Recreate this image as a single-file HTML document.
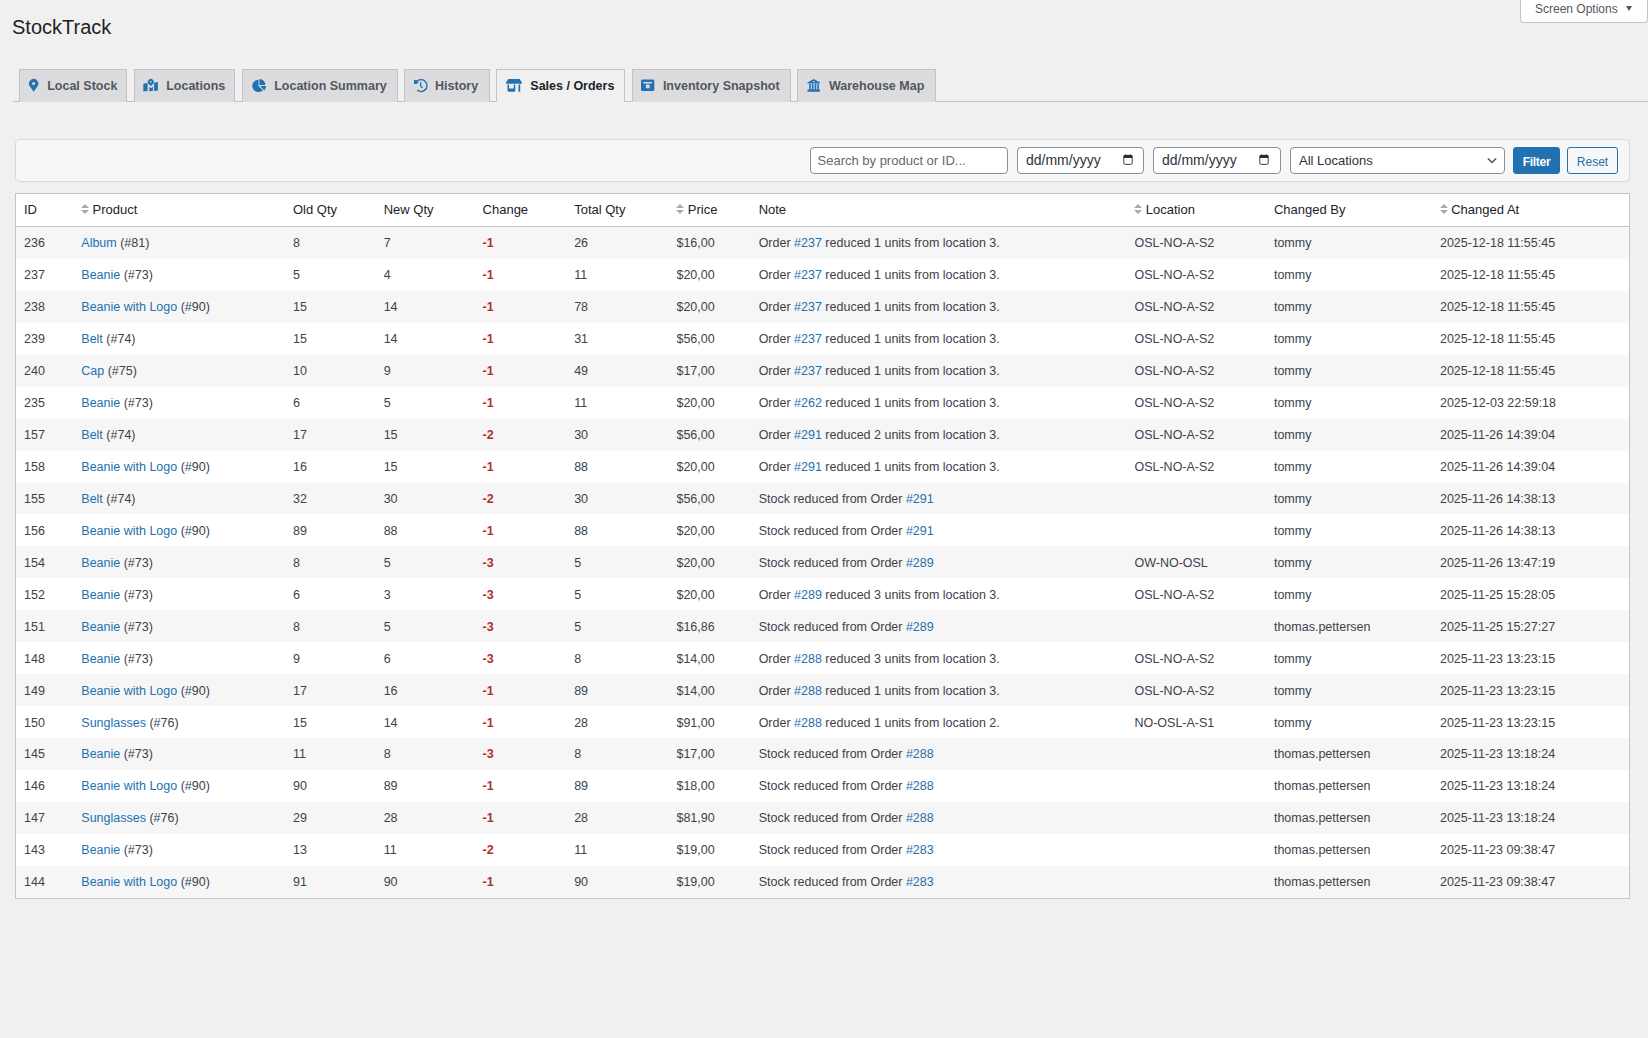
<!DOCTYPE html>
<html><head><meta charset="utf-8">
<style>
*{box-sizing:border-box}
html,body{margin:0;padding:0}
body{width:1648px;height:1038px;overflow:hidden;background:#f0f0f1;font-family:"Liberation Sans",sans-serif;color:#3c434a;position:relative}
.title{position:absolute;left:12px;top:15px;font-size:20px;line-height:24px;color:#1d2327;margin:0;font-weight:400}
.scr{position:absolute;left:1520px;top:-1px;width:128px;height:24px;background:#fff;border:1px solid #c3c4c7;border-top:none;border-radius:0 0 4px 4px;font-size:12px;color:#50575e;line-height:21px}
.scr span{position:absolute;left:14px;top:0}
.scr i{position:absolute;left:104.5px;top:7px;width:0;height:0;border-left:3.7px solid transparent;border-right:3.7px solid transparent;border-top:5.5px solid #50575e}
.tabline{position:absolute;left:13px;right:0;top:101px;height:1px;background:#c3c4c7}
.tab{position:absolute;top:69px;height:33px;background:#dcdcde;border:1px solid #c3c4c7;border-bottom:none;font-size:12.5px;font-weight:700;color:#50575e;line-height:31px;white-space:nowrap}
.tab.active{background:#f0f0f1;color:#1d2327;height:33px;z-index:2}
.tab svg{position:absolute;top:8px;fill:#2271b1}
.tab span{position:absolute;top:1px}
.fbox{position:absolute;left:15px;top:139px;width:1615px;height:43px;background:#f7f7f8;border:1px solid #d9d9dc;border-radius:5px}
.inp{position:absolute;top:147px;height:27px;background:#fff;border:1px solid #8c8f94;border-radius:4px;font-size:13px;color:#646970;line-height:25px;white-space:nowrap}
.inp span{position:absolute;top:0}
.btn{position:absolute;top:147px;height:27px;border-radius:3px;font-size:12px;line-height:28px;text-align:center}
table{position:absolute;left:15px;top:193px;width:1615px;border:1px solid #c3c4c7;border-collapse:separate;border-spacing:0;table-layout:fixed;background:#fff;font-size:13px}
th{height:33px;text-align:left;font-weight:400;color:#1d2327;border-bottom:1px solid #c3c4c7;padding:0 0 0 8px;white-space:nowrap;line-height:32px}
td{height:31.952px;padding:0 0 0 8px;white-space:nowrap;color:#3c434a;font-size:12.5px;letter-spacing:0;line-height:30px;padding-top:1px}
tbody tr:nth-child(odd) td{background:#f6f6f6}
a{color:#2271b1;text-decoration:none}
.neg{color:#b32d2e;font-weight:700}
.sort{display:inline-block;width:8px;height:12px;position:relative;margin-right:3.3px;vertical-align:-1px}
.sort:before{content:"";position:absolute;left:0;top:0.6px;border-left:4px solid transparent;border-right:4px solid transparent;border-bottom:4.8px solid #a7aaad}
.sort:after{content:"";position:absolute;left:0;top:7px;border-left:4px solid transparent;border-right:4px solid transparent;border-top:4.8px solid #a7aaad}
</style></head>
<body>
<h1 class="title">StockTrack</h1>
<div class="scr"><span>Screen Options</span><i></i></div>

<div class="tabline"></div>
<div class="tab" style="left:19px;width:108px"><span style="left:27.2px">Local Stock</span></div>
<div class="tab" style="left:134px;width:101px"><span style="left:31.2px">Locations</span></div>
<div class="tab" style="left:242px;width:156px"><span style="left:31.2px">Location Summary</span></div>
<div class="tab" style="left:404px;width:86px"><span style="left:30.1px">History</span></div>
<div class="tab active" style="left:496px;width:129px"><span style="left:33.3px">Sales / Orders</span></div>
<div class="tab" style="left:632px;width:159px"><span style="left:29.9px">Inventory Snapshot</span></div>
<div class="tab" style="left:797px;width:139px"><span style="left:30.9px">Warehouse Map</span></div>

<svg class="icons" width="1648" height="110" style="position:absolute;left:0;top:0;z-index:5" fill="#2271b1">
<path fill-rule="evenodd" d="M33.65 91.8L29.95 86.4A4.65 4.65 0 1 1 37.35 86.4Z M32.1 83.6a1.5 1.5 0 1 0 3 0a1.5 1.5 0 1 0 -3 0Z"/>
<path d="M143.3 83.8L147.6 82.9V91L143.3 91.6Z M154.1 82.7L157.9 81.9V90.4L154.1 91Z M149.3 86.8L150.9 88.3L152.9 86.5V90.9L149.3 91.2Z"/>
<path fill-rule="evenodd" d="M150.9 85.9L149 84.3A2.95 2.95 0 1 1 152.7 84.3Z M149.9 81.8a0.9 0.9 0 1 0 1.8 0a0.9 0.9 0 1 0 -1.8 0Z"/>
<path d="M258.5 85.9V79.7A6.2 6.2 0 1 0 262.9 90.3Z M259.4 84.9V78.9A6 6 0 0 1 265.4 84.9Z M260.3 86.1H266A6 6 0 0 1 264.3 90.5Z"/>
<path fill="none" stroke="#2271b1" stroke-width="1.5" d="M418.2 80.4A5.9 5.9 0 1 1 417.3 90.2"/>
<path d="M414 79.9L418.3 80.2L418.3 82.4L416.6 84L414 84Z"/>
<path fill="none" stroke="#2271b1" stroke-width="1.3" d="M420.6 82.2V85.9L422.6 87.9"/>
<path d="M508.3 79H519.7L522.1 82.8Q522.1 83.8 521 83.8H507Q505.8 83.8 505.8 82.8Z M507.5 84.5H509.1V88.4H513.7V84.5H515.3V90.6Q515.3 91.7 514.2 91.7H508.6Q507.5 91.7 507.5 90.6Z M518.5 84.5H520.2V91.7H518.5Z"/>
<path fill-rule="evenodd" d="M642.5 79.6H653Q654.3 79.6 654.3 80.9V89.7Q654.3 91 653 91H642.3Q641 91 641 89.7V81Q641 79.6 642.5 79.6Z M643.3 82H652V83.5H643.3Z M645.7 86.4a2.1 2.1 0 1 0 4.2 0a2.1 2.1 0 1 0 -4.2 0Z"/>
<path fill-rule="evenodd" d="M807.5 82.6L813.8 79L820 82.6V83.6H807.5Z M812.6 82H815.1L813.85 80.8Z M809.2 83.9H810.8V89.6H809.2Z M811.9 83.9H813.5V89.6H811.9Z M814.7 83.9H816.3V89.6H814.7Z M817.3 83.9H818.9V89.6H817.3Z M807.5 89.6H820V91.8H807.5Z"/>
</svg>
<div class="fbox"></div>
<div class="inp" style="left:810px;width:198px"><span style="left:6.5px">Search by product or ID...</span></div>
<div class="inp" style="left:1017px;width:127px;color:#2c3338;font-size:14px"><span style="left:8px">dd/mm/yyyy</span></div>
<div class="inp" style="left:1153px;width:128px;color:#2c3338;font-size:14px"><span style="left:8px">dd/mm/yyyy</span></div>
<div class="inp" style="left:1290px;width:215px;color:#2c3338"><span style="left:8px">All Locations</span></div>
<div class="btn" style="left:1513px;width:47px;background:#2271b1;border:1px solid #2271b1;color:#fff;font-weight:700;letter-spacing:-0.3px">Filter</div>
<div class="btn" style="left:1567px;width:51px;background:#f6f7f7;border:1px solid #2271b1;color:#2271b1">Reset</div>

<svg width="1648" height="30" style="position:absolute;left:0;top:147px;z-index:5">
<g fill="none" stroke="#1d2327">
<rect x="1123.8" y="8.3" width="8.4" height="9" rx="1.3" stroke-width="1" stroke="#3c434a"/>
<path d="M1123.8 9.6H1132.2" stroke-width="2.6"/>
<rect x="1259.8" y="8.3" width="8.4" height="9" rx="1.3" stroke-width="1" stroke="#3c434a"/>
<path d="M1259.8 9.6H1268.2" stroke-width="2.6"/>
</g>
<path d="M1125.5 7.5V9 M1130.5 7.5V9 M1261.5 7.5V9 M1266.5 7.5V9" stroke="#1d2327" stroke-width="1"/>
<path d="M1487.9 11.5L1492 15.5L1496.1 11.5" fill="none" stroke="#50575e" stroke-width="1.6"/>
</svg>
<table>
<colgroup><col style="width:57.3px"><col style="width:211.7px"><col style="width:90.7px"><col style="width:98.9px"><col style="width:91.6px"><col style="width:102.3px"><col style="width:82.2px"><col style="width:375.8px"><col style="width:139.5px"><col style="width:166px"><col></colgroup>
<thead><tr><th>ID</th><th><i class="sort"></i>Product</th><th>Old Qty</th><th>New Qty</th><th>Change</th><th>Total Qty</th><th><i class="sort"></i>Price</th><th>Note</th><th><i class="sort"></i>Location</th><th>Changed By</th><th><i class="sort"></i>Changed At</th></tr></thead>
<tbody>
<tr><td>236</td><td><a>Album</a> (#81)</td><td>8</td><td>7</td><td class="neg">-1</td><td>26</td><td>$16,00</td><td>Order <a>#237</a> reduced 1 units from location 3.</td><td>OSL-NO-A-S2</td><td>tommy</td><td>2025-12-18 11:55:45</td></tr>
<tr><td>237</td><td><a>Beanie</a> (#73)</td><td>5</td><td>4</td><td class="neg">-1</td><td>11</td><td>$20,00</td><td>Order <a>#237</a> reduced 1 units from location 3.</td><td>OSL-NO-A-S2</td><td>tommy</td><td>2025-12-18 11:55:45</td></tr>
<tr><td>238</td><td><a>Beanie with Logo</a> (#90)</td><td>15</td><td>14</td><td class="neg">-1</td><td>78</td><td>$20,00</td><td>Order <a>#237</a> reduced 1 units from location 3.</td><td>OSL-NO-A-S2</td><td>tommy</td><td>2025-12-18 11:55:45</td></tr>
<tr><td>239</td><td><a>Belt</a> (#74)</td><td>15</td><td>14</td><td class="neg">-1</td><td>31</td><td>$56,00</td><td>Order <a>#237</a> reduced 1 units from location 3.</td><td>OSL-NO-A-S2</td><td>tommy</td><td>2025-12-18 11:55:45</td></tr>
<tr><td>240</td><td><a>Cap</a> (#75)</td><td>10</td><td>9</td><td class="neg">-1</td><td>49</td><td>$17,00</td><td>Order <a>#237</a> reduced 1 units from location 3.</td><td>OSL-NO-A-S2</td><td>tommy</td><td>2025-12-18 11:55:45</td></tr>
<tr><td>235</td><td><a>Beanie</a> (#73)</td><td>6</td><td>5</td><td class="neg">-1</td><td>11</td><td>$20,00</td><td>Order <a>#262</a> reduced 1 units from location 3.</td><td>OSL-NO-A-S2</td><td>tommy</td><td>2025-12-03 22:59:18</td></tr>
<tr><td>157</td><td><a>Belt</a> (#74)</td><td>17</td><td>15</td><td class="neg">-2</td><td>30</td><td>$56,00</td><td>Order <a>#291</a> reduced 2 units from location 3.</td><td>OSL-NO-A-S2</td><td>tommy</td><td>2025-11-26 14:39:04</td></tr>
<tr><td>158</td><td><a>Beanie with Logo</a> (#90)</td><td>16</td><td>15</td><td class="neg">-1</td><td>88</td><td>$20,00</td><td>Order <a>#291</a> reduced 1 units from location 3.</td><td>OSL-NO-A-S2</td><td>tommy</td><td>2025-11-26 14:39:04</td></tr>
<tr><td>155</td><td><a>Belt</a> (#74)</td><td>32</td><td>30</td><td class="neg">-2</td><td>30</td><td>$56,00</td><td>Stock reduced from Order <a>#291</a></td><td></td><td>tommy</td><td>2025-11-26 14:38:13</td></tr>
<tr><td>156</td><td><a>Beanie with Logo</a> (#90)</td><td>89</td><td>88</td><td class="neg">-1</td><td>88</td><td>$20,00</td><td>Stock reduced from Order <a>#291</a></td><td></td><td>tommy</td><td>2025-11-26 14:38:13</td></tr>
<tr><td>154</td><td><a>Beanie</a> (#73)</td><td>8</td><td>5</td><td class="neg">-3</td><td>5</td><td>$20,00</td><td>Stock reduced from Order <a>#289</a></td><td>OW-NO-OSL</td><td>tommy</td><td>2025-11-26 13:47:19</td></tr>
<tr><td>152</td><td><a>Beanie</a> (#73)</td><td>6</td><td>3</td><td class="neg">-3</td><td>5</td><td>$20,00</td><td>Order <a>#289</a> reduced 3 units from location 3.</td><td>OSL-NO-A-S2</td><td>tommy</td><td>2025-11-25 15:28:05</td></tr>
<tr><td>151</td><td><a>Beanie</a> (#73)</td><td>8</td><td>5</td><td class="neg">-3</td><td>5</td><td>$16,86</td><td>Stock reduced from Order <a>#289</a></td><td></td><td>thomas.pettersen</td><td>2025-11-25 15:27:27</td></tr>
<tr><td>148</td><td><a>Beanie</a> (#73)</td><td>9</td><td>6</td><td class="neg">-3</td><td>8</td><td>$14,00</td><td>Order <a>#288</a> reduced 3 units from location 3.</td><td>OSL-NO-A-S2</td><td>tommy</td><td>2025-11-23 13:23:15</td></tr>
<tr><td>149</td><td><a>Beanie with Logo</a> (#90)</td><td>17</td><td>16</td><td class="neg">-1</td><td>89</td><td>$14,00</td><td>Order <a>#288</a> reduced 1 units from location 3.</td><td>OSL-NO-A-S2</td><td>tommy</td><td>2025-11-23 13:23:15</td></tr>
<tr><td>150</td><td><a>Sunglasses</a> (#76)</td><td>15</td><td>14</td><td class="neg">-1</td><td>28</td><td>$91,00</td><td>Order <a>#288</a> reduced 1 units from location 2.</td><td>NO-OSL-A-S1</td><td>tommy</td><td>2025-11-23 13:23:15</td></tr>
<tr><td>145</td><td><a>Beanie</a> (#73)</td><td>11</td><td>8</td><td class="neg">-3</td><td>8</td><td>$17,00</td><td>Stock reduced from Order <a>#288</a></td><td></td><td>thomas.pettersen</td><td>2025-11-23 13:18:24</td></tr>
<tr><td>146</td><td><a>Beanie with Logo</a> (#90)</td><td>90</td><td>89</td><td class="neg">-1</td><td>89</td><td>$18,00</td><td>Stock reduced from Order <a>#288</a></td><td></td><td>thomas.pettersen</td><td>2025-11-23 13:18:24</td></tr>
<tr><td>147</td><td><a>Sunglasses</a> (#76)</td><td>29</td><td>28</td><td class="neg">-1</td><td>28</td><td>$81,90</td><td>Stock reduced from Order <a>#288</a></td><td></td><td>thomas.pettersen</td><td>2025-11-23 13:18:24</td></tr>
<tr><td>143</td><td><a>Beanie</a> (#73)</td><td>13</td><td>11</td><td class="neg">-2</td><td>11</td><td>$19,00</td><td>Stock reduced from Order <a>#283</a></td><td></td><td>thomas.pettersen</td><td>2025-11-23 09:38:47</td></tr>
<tr><td>144</td><td><a>Beanie with Logo</a> (#90)</td><td>91</td><td>90</td><td class="neg">-1</td><td>90</td><td>$19,00</td><td>Stock reduced from Order <a>#283</a></td><td></td><td>thomas.pettersen</td><td>2025-11-23 09:38:47</td></tr>
</tbody>
</table>
</body></html>
